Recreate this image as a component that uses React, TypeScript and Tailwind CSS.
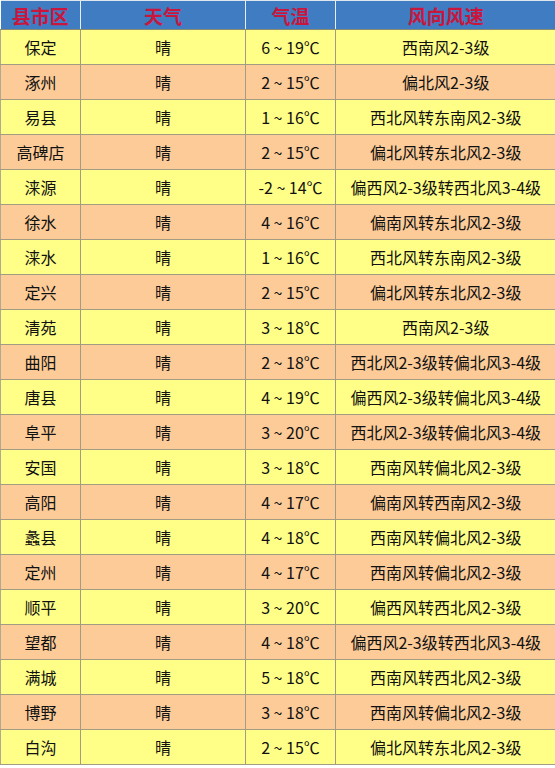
const rows: [string, string, string, string][] = [
  ['保定', '晴', '6 ~ 19℃', '西南风2-3级'],
  ['涿州', '晴', '2 ~ 15℃', '偏北风2-3级'],
  ['易县', '晴', '1 ~ 16℃', '西北风转东南风2-3级'],
  ['高碑店', '晴', '2 ~ 15℃', '偏北风转东北风2-3级'],
  ['涞源', '晴', '-2 ~ 14℃', '偏西风2-3级转西北风3-4级'],
  ['徐水', '晴', '4 ~ 16℃', '偏南风转东北风2-3级'],
  ['涞水', '晴', '1 ~ 16℃', '西北风转东南风2-3级'],
  ['定兴', '晴', '2 ~ 15℃', '偏北风转东北风2-3级'],
  ['清苑', '晴', '3 ~ 18℃', '西南风2-3级'],
  ['曲阳', '晴', '2 ~ 18℃', '西北风2-3级转偏北风3-4级'],
  ['唐县', '晴', '4 ~ 19℃', '偏西风2-3级转偏北风3-4级'],
  ['阜平', '晴', '3 ~ 20℃', '西北风2-3级转偏北风3-4级'],
  ['安国', '晴', '3 ~ 18℃', '西南风转偏北风2-3级'],
  ['高阳', '晴', '4 ~ 17℃', '偏南风转西南风2-3级'],
  ['蠡县', '晴', '4 ~ 18℃', '西南风转偏北风2-3级'],
  ['定州', '晴', '4 ~ 17℃', '西南风转偏北风2-3级'],
  ['顺平', '晴', '3 ~ 20℃', '偏西风转西北风2-3级'],
  ['望都', '晴', '4 ~ 18℃', '偏西风2-3级转西北风3-4级'],
  ['满城', '晴', '5 ~ 18℃', '西南风转西北风2-3级'],
  ['博野', '晴', '3 ~ 18℃', '西南风转偏北风2-3级'],
  ['白沟', '晴', '2 ~ 15℃', '偏北风转东北风2-3级'],
];

const headers = ['县市区', '天气', '气温', '风向风速'];

export default function App() {
  return (
    <div className="w-[555px] min-h-[768px] bg-white font-['Noto_Sans_CJK_SC',sans-serif]">
      <table className="w-[555px] table-fixed border-collapse">
        <colgroup>
          <col className="w-[80px]" />
          <col className="w-[165px]" />
          <col className="w-[90px]" />
          <col className="w-[220px]" />
        </colgroup>
        <thead>
          <tr className="h-[29px] bg-[#3f7cc2]">
            {headers.map((h, i) => (
              <th
                key={h}
                className={
                  'border-t border-t-[#dfe6ee] border-b border-b-[#8a8a70] p-0 text-center text-[19px] font-bold leading-none text-[#c8163c] ' +
                  (i > 0 ? 'border-l border-l-[#e8eef6]' : '')
                }
              >
                {h}
              </th>
            ))}
          </tr>
        </thead>
        <tbody>
          {rows.map((r, idx) => (
            <tr key={r[0]} className={'h-[35px] ' + (idx % 2 === 0 ? 'bg-[#ffff88]' : 'bg-[#fccb98]')}>
              {r.map((c, i) => (
                <td
                  key={i}
                  className={
                    'border-b border-b-[#a39c84] p-0 text-center text-[16px] leading-none text-[#111111] ' +
                    (i === 0 ? 'border-l border-l-[#b0aa90]' : 'border-l border-l-[#a39c84]')
                  }
                >
                  {c}
                </td>
              ))}
            </tr>
          ))}
        </tbody>
      </table>
    </div>
  );
}
